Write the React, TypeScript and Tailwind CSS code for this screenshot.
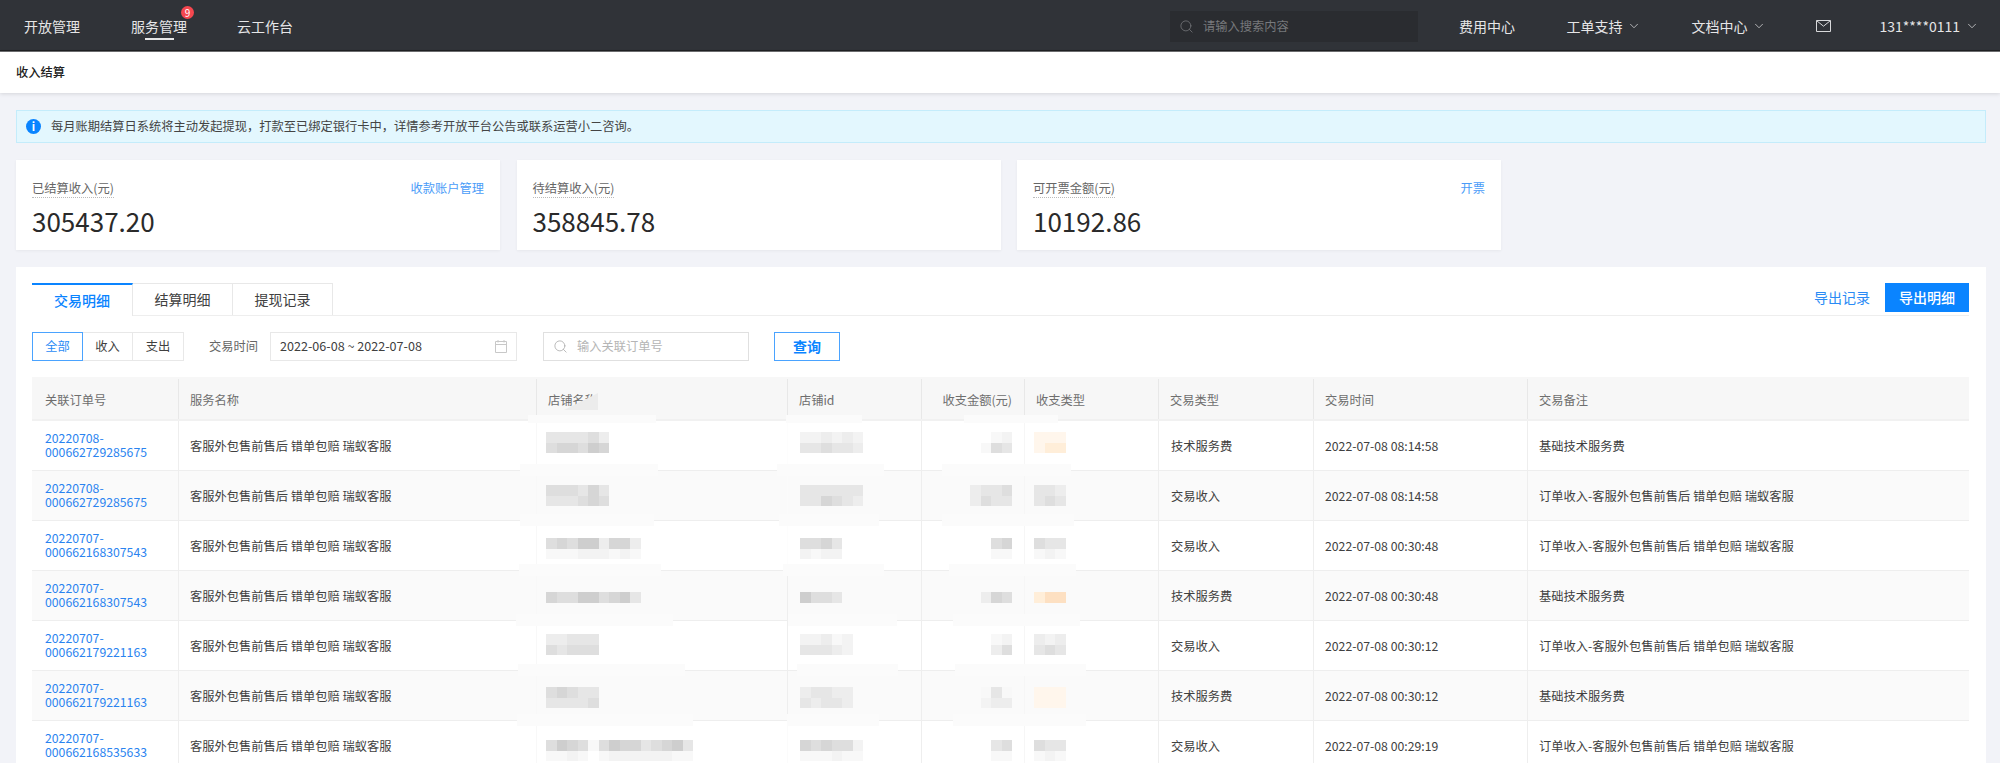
import { ChevronDown, Search } from 'lucide-react';

const FONT = 'font-["Noto_Sans_CJK_SC",sans-serif]';
const SERVICE = '客服外包售前售后 错单包赔 瑞蚁客服';

const columns = ['关联订单号', '服务名称', '店铺名称', '店铺id', '收支金额(元)', '收支类型', '交易类型', '交易时间', '交易备注'];
const gridCols = 'grid grid-cols-[146px_358px_251px_134px_103px_134px_155px_214px_442px]';

// mosaic shades for the redacted cells
const shades: Record<string, string> = {
  a: 'bg-[#f8f8f8]',
  b: 'bg-[#f3f3f3]',
  c: 'bg-[#ededed]',
  d: 'bg-[#e6e6e6]',
  e: 'bg-[#dedede]',
  f: 'bg-[#d6d6d6]',
  g: 'bg-[#cecece]',
  o: 'bg-[#fff6ec]',
  p: 'bg-[#ffeed9]',
  q: 'bg-[#fde0c2]',
  ' ': 'bg-transparent',
};

interface Row {
  order: string;
  kind: string;
  time: string;
  note: string;
  top: string;
  shop: string[];
  store: string[];
  amount: string[];
  type: string[];
  halos: string[];
  shopLine: string;
  storeLine: string;
}

const INCOME_NOTE = `订单收入-${SERVICE}`;

const rows: Row[] = [
  {
    order: '20220708-000662729285675', kind: '技术服务费', time: '2022-07-08 08:14:58', note: '基础技术服务费', top: 'pt-[11px]',
    shop: ['ddddec', 'effegf'], store: ['bbcbcb', 'ddeddc'], amount: [' ab', 'aed'], type: ['ooo', 'opp'],
    halos: ['left-[488px] w-[138px]', 'left-[745px] w-[107px]', 'left-[910px] w-[129px]'],
    shopLine: 'border-l-[#f8f8f8]', storeLine: 'border-l-[#fdfdfd]',
  },
  {
    order: '20220708-000662729285675', kind: '交易收入', time: '2022-07-08 08:14:58', note: INCOME_NOTE, top: 'pt-[14px]',
    shop: ['eeedfd', 'dddefe'], store: ['dddddd', 'ddfedc'], amount: ['cdde', 'cedd'], type: ['ddc', 'ded'],
    halos: ['left-[488px] w-[134px]', 'left-[747px] w-[100px]', 'left-[910px] w-[132px]'],
    shopLine: 'border-l-[#f8f8f8]', storeLine: 'border-l-[#fbfbfb]',
  },
  {
    order: '20220707-000662168307543', kind: '交易收入', time: '2022-07-08 00:30:48', note: INCOME_NOTE, top: 'pt-[17px]',
    shop: ['efeggcffc', 'aaabbbaba'], store: ['eefd', 'babb'], amount: [' ef', ' aa'], type: ['edd', 'aba'],
    halos: ['left-[487px] w-[142px]', 'left-[751px] w-[101px]', 'left-[917px] w-[127px]'],
    shopLine: 'border-l-[#f8f8f8]', storeLine: 'border-l-[#fdfdfd]',
  },
  {
    order: '20220707-000662168307543', kind: '技术服务费', time: '2022-07-08 00:30:48', note: '基础技术服务费', top: 'pt-[21px]',
    shop: ['feeggefgd'], store: ['geed'], amount: ['cfe'], type: ['pqq'],
    halos: ['left-[484px] w-[157px]', 'left-[756px] w-[109px]', 'left-[921px] w-[127px]'],
    shopLine: 'border-l-[#f8f8f8]', storeLine: 'border-l-[#eeeeee]',
  },
  {
    order: '20220707-000662179221163', kind: '交易收入', time: '2022-07-08 00:30:12', note: INCOME_NOTE, top: 'pt-[13px]',
    shop: ['ccddd', 'edeee'], store: ['bbcab', 'dddcb'], amount: [' ab', ' ce'], type: ['cbc', 'ded'],
    halos: ['left-[486px] w-[167px]', 'left-[765px] w-[101px]', 'left-[923px] w-[131px]'],
    shopLine: 'border-l-[#f8f8f8]', storeLine: 'border-l-[#eeeeee]',
  },
  {
    order: '20220707-000662179221163', kind: '技术服务费', time: '2022-07-08 00:30:12', note: '基础技术服务费', top: 'pt-[16px]',
    shop: ['efedd', 'dddde'], store: ['cddcc', 'dcddc'], amount: ['ada', 'bcc'], type: ['ooo', 'ooo'],
    halos: ['left-[485px] w-[176px]', 'left-[755px] w-[92px]', 'left-[921px] w-[133px]'],
    shopLine: 'border-l-[#f8f8f8]', storeLine: 'border-l-[#eeeeee]',
  },
  {
    order: '20220707-000662168535633', kind: '交易收入', time: '2022-07-08 00:29:19', note: INCOME_NOTE, top: 'pt-[19px]',
    shop: ['egfeaegffdefgd', 'aaba abbbbbbaa'], store: ['fefeeb', 'aaabaa'], amount: [' de', ' aa'], type: ['edd', 'aba'],
    halos: [],
    shopLine: 'border-l-[#f8f8f8]', storeLine: 'border-l-[#fbfbfb]',
  },
];

const Mosaic = ({ lines, end }: { lines: string[]; end?: boolean }) => (
  <div className={`flex flex-col ${end ? 'items-end' : 'items-start'}`}>
    {lines.map((line, i) => (
      <div key={i} className="flex">
        {line.split('').map((c, j) => (
          <span key={j} className={`w-[10.5px] h-[10.5px] ${shades[c]}`} />
        ))}
      </div>
    ))}
  </div>
);

const MailIcon = () => (
  <svg width="15" height="12" viewBox="0 0 15 12" fill="none" stroke="#d8d9db" strokeWidth="1">
    <path d="M.5.5h14v11H.5z" />
    <path d="M.8.8l6.7 5.4 6.7-5.4" />
  </svg>
);

const CalendarIcon = () => (
  <svg width="12" height="13" viewBox="0 0 12 13" fill="none" stroke="#c8c8c8" strokeWidth="1">
    <path d="M.5 1.5h11v11H.5z" />
    <path d="M.5 4.5h11M3 0v2.5M9 0v2.5" />
  </svg>
);

const NavDrop = ({ label, className }: { label: string; className?: string }) => (
  <div className={`flex items-center gap-[5px] ${className ?? ''}`}>
    <span>{label}</span>
    <ChevronDown className="w-[14px] h-[14px] text-[#e0e1e2]" strokeWidth={1.25} />
  </div>
);

const StatCard = ({ label, value, action }: { label: string; value: string; action: string }) => (
  <div className="w-[484px] h-[90px] bg-white px-4 pt-[18px] shadow-[0_1px_3px_rgba(0,0,0,0.05)]">
    <div className="flex items-center justify-between h-5">
      <span className="text-[12.25px] text-[#666] border-b border-dotted border-[#bbb] leading-[18px]">{label}</span>
      <span className="text-[12.25px] text-[#4a9cf8]">{action}</span>
    </div>
    <div className="mt-[6px] text-[26px] leading-[34px] text-[#2a2a2a]">{value}</div>
  </div>
);

export default function App() {
  return (
    <div className={`h-screen overflow-hidden bg-[#f2f3f8] text-[12.25px] text-[#404040] ${FONT}`}>
      {/* top nav */}
      <div className="h-[52px] bg-[#303338] shadow-[inset_0_-1px_0_#6f7072,inset_0_-2px_0_#1f2023] flex items-center pl-6 pr-[21px] text-[14px] text-[#e6e6e7]">
        <span>开放管理</span>
        <div className="relative ml-[51px] h-full flex items-center">
          <span>服务管理</span>
          <span className="absolute left-[50px] top-[6px] w-[13px] h-[13px] rounded-full bg-[#f5474f] text-[10px] leading-[13px] text-center text-white">9</span>
          <span className="absolute left-[14px] bottom-[12px] w-[29px] h-[2px] bg-[#e6e6e7]" />
        </div>
        <span className="ml-[50px]">云工作台</span>
        <div className="ml-auto w-[248px] h-[31px] bg-[#2a2c30] flex items-center pl-[9px] text-[12.25px] text-[#77797c]">
          <Search className="w-[15px] h-[15px] mr-[9px] text-[#77797c]" strokeWidth={1.25} />
          请输入搜索内容
        </div>
        <span className="ml-[41px]">费用中心</span>
        <NavDrop label="工单支持" className="ml-[51.5px]" />
        <NavDrop label="文档中心" className="ml-[50px]" />
        <span className="ml-[49.5px] flex"><MailIcon /></span>
        <NavDrop label="131****0111" className="ml-[48.5px]" />
      </div>

      {/* breadcrumb */}
      <div className="h-[41px] bg-white flex items-center pl-4 font-medium text-[#222] shadow-[0_1px_4px_rgba(0,0,0,0.12)]">收入结算</div>

      {/* notice */}
      <div className="mt-[17px] ml-4 mr-[14px] h-[33px] bg-[#e3f7fe] border border-[#c4ecfb] flex items-center pl-[9px] text-[#444]">
        <span className="w-[15px] h-[15px] mr-[10px] rounded-full bg-[#0a84ff] text-white text-[11px] leading-[15px] text-center font-bold">i</span>
        每月账期结算日系统将主动发起提现，打款至已绑定银行卡中，详情参考开放平台公告或联系运营小二咨询。
      </div>

      {/* stat cards */}
      <div className="mt-[17px] mx-4 flex gap-[16.5px]">
        <StatCard label="已结算收入(元)" value="305437.20" action="收款账户管理" />
        <StatCard label="待结算收入(元)" value="358845.78" action="" />
        <StatCard label="可开票金额(元)" value="10192.86" action="开票" />
      </div>

      {/* main panel */}
      <div className="mt-[17px] ml-4 mr-[14px] bg-white pl-4 pr-[17px] pt-4 h-[600px]">
        <div className="flex items-start justify-between h-[33px] border-b border-[#eeeeee]">
          <div className="flex text-[14px] h-[33px]">
            <div className="w-[101px] h-[33px] border-t-2 border-t-[#0a84ff] border-r border-[#e8e8e8] bg-white text-[#0a84ff] font-medium flex items-center justify-center">交易明细</div>
            <div className="w-[100px] h-[32px] border-t border-r border-[#e8e8e8] flex items-center justify-center">结算明细</div>
            <div className="w-[100px] h-[32px] border-t border-r border-[#e8e8e8] flex items-center justify-center">提现记录</div>
          </div>
          <div className="flex items-center gap-[15px] text-[14px]">
            <span className="text-[#2a8bf5]">导出记录</span>
            <span className="w-[84px] h-[29px] bg-[#0a84ff] text-white font-medium flex items-center justify-center">导出明细</span>
          </div>
        </div>

        <div className="mt-4 flex items-center h-[29px]">
          <div className="flex h-full">
            <span className="w-[51px] border border-[#4aa3ff] text-[#2a8bf5] flex items-center justify-center">全部</span>
            <span className="w-[50px] border-y border-r border-[#e8e8e8] flex items-center justify-center">收入</span>
            <span className="w-[51px] border-y border-r border-[#e8e8e8] flex items-center justify-center">支出</span>
          </div>
          <span className="ml-[25px] text-[#666]">交易时间</span>
          <div className="ml-3 w-[247px] h-full border border-[#e8e8e8] flex items-center justify-between pl-[9px] pr-[9px]">
            <span className="text-[12.6px]">2022-06-08 ~ 2022-07-08</span>
            <CalendarIcon />
          </div>
          <div className="ml-[26px] w-[206px] h-full border border-[#e0e0e0] flex items-center pl-[9px] text-[#b5b5b5]">
            <Search className="w-[15px] h-[15px] mr-[9px] text-[#a8a8a8]" strokeWidth={1.25} />
            输入关联订单号
          </div>
          <span className="ml-[25px] w-[66px] h-full border border-[#4aa3ff] text-[14px] font-bold text-[#0a84ff] flex items-center justify-center">查询</span>
        </div>

        {/* table */}
        <div className="mt-4">
          <div className={`${gridCols} relative h-[44px] bg-[#f7f7f7] border-b-2 border-[#f1f1f1] text-[#6e6e6e]`}>
            {columns.map((c, i) => (
              <div key={c} className={`flex items-center pt-[3px] ${i > 0 ? 'pl-[11px] pr-3 border-l border-l-[#e8e8e8] mt-[2px]' : 'px-[13px] pt-[5px]'} ${i === 4 ? 'justify-end' : ''}`}>
                {c}
              </div>
            ))}
            {/* redaction smear over the shop-name header */}
            <span className="absolute left-[532px] top-[16px] w-[34px] h-[17px] bg-[#ececec] [clip-path:polygon(100%_0,100%_100%,0_100%)]" />
            <span className="absolute left-[496px] bottom-[-4px] w-[128px] h-[8px] bg-[#fbfbfb] z-10" />
            <span className="absolute left-[754px] bottom-[-4px] w-[76px] h-[8px] bg-[#fbfbfb] z-10" />
            <span className="absolute left-[932px] bottom-[-4px] w-[94px] h-[8px] bg-[#fbfbfb] z-10" />
          </div>
          {rows.map((r, i) => (
            <div key={i} className={`${gridCols} relative h-[50px] border-b border-[#eeeeee] ${i % 2 ? 'bg-[#fafafa]' : 'bg-white'}`}>
              <div className="flex items-center pl-[13px] pr-2 leading-[14px] text-[#2a83f0] break-all">
                <span className="-mt-[2px]">{r.order.split('-')[0]}-<br />{r.order.split('-')[1]}</span>
              </div>
              <div className="flex items-center pl-[11px] pt-[1px] border-l border-l-[#eeeeee]">{SERVICE}</div>
              <div className={`pl-[9px] border-l ${r.shopLine} ${r.top}`}><Mosaic lines={r.shop} /></div>
              <div className={`pl-[12px] border-l ${r.storeLine} ${r.top}`}><Mosaic lines={r.store} /></div>
              <div className={`pr-[12px] border-l border-l-[#eeeeee] ${r.top}`}><Mosaic lines={r.amount} end /></div>
              <div className={`pl-[9px] border-l border-l-[#f6f6f6] ${r.top}`}><Mosaic lines={r.type} /></div>
              <div className="flex items-center pl-[12px] pt-[1px] border-l border-l-[#eeeeee]">{r.kind}</div>
              <div className="flex items-center pl-[11px] pt-[1px] border-l border-l-[#eeeeee]">{r.time}</div>
              <div className="flex items-center pl-[11px] pt-[1px] border-l border-l-[#eeeeee]">{r.note}</div>
              {r.halos.map(h => (
                <span key={h} className={`absolute bottom-[-6px] h-[12px] bg-[#fbfbfb] z-10 ${h}`} />
              ))}
            </div>
          ))}
        </div>
      </div>
    </div>
  );
}
